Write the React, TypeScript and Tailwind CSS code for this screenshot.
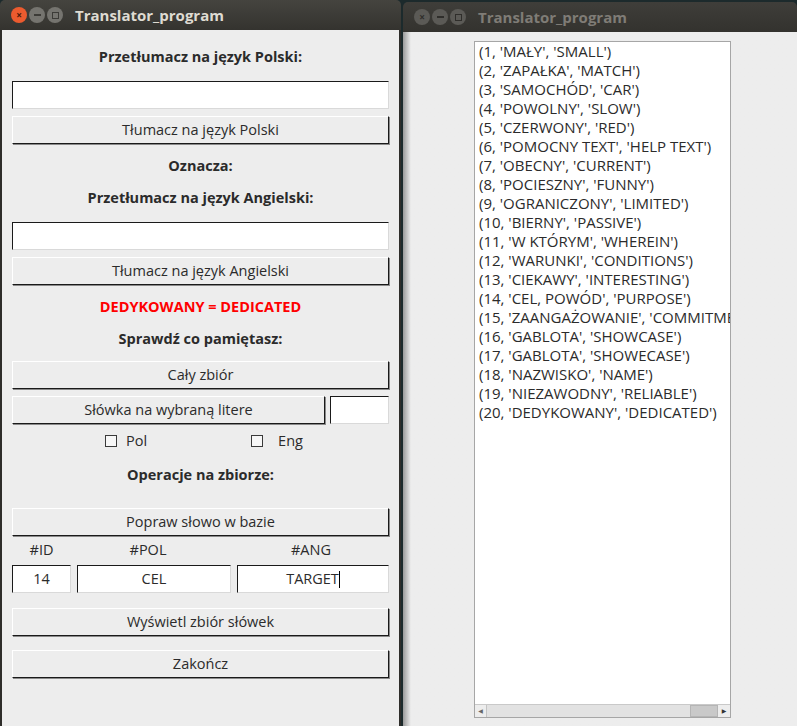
import React from 'react';

const FONT = { fontFamily: '"Open Sans", "DejaVu Sans", sans-serif' };

const words: string[] = [
  "(1, 'MAŁY', 'SMALL')",
  "(2, 'ZAPAŁKA', 'MATCH')",
  "(3, 'SAMOCHÓD', 'CAR')",
  "(4, 'POWOLNY', 'SLOW')",
  "(5, 'CZERWONY', 'RED')",
  "(6, 'POMOCNY TEXT', 'HELP TEXT')",
  "(7, 'OBECNY', 'CURRENT')",
  "(8, 'POCIESZNY', 'FUNNY')",
  "(9, 'OGRANICZONY', 'LIMITED')",
  "(10, 'BIERNY', 'PASSIVE')",
  "(11, 'W KTÓRYM', 'WHEREIN')",
  "(12, 'WARUNKI', 'CONDITIONS')",
  "(13, 'CIEKAWY', 'INTERESTING')",
  "(14, 'CEL, POWÓD', 'PURPOSE')",
  "(15, 'ZAANGAŻOWANIE', 'COMMITMENT')",
  "(16, 'GABLOTA', 'SHOWCASE')",
  "(17, 'GABLOTA', 'SHOWECASE')",
  "(18, 'NAZWISKO', 'NAME')",
  "(19, 'NIEZAWODNY', 'RELIABLE')",
  "(20, 'DEDYKOWANY', 'DEDICATED')",
];

const TitleBar: React.FC<{ active: boolean }> = ({ active }) => (
  <div
    className={`flex items-center h-[30px] rounded-t-[5px] ${
      active ? 'bg-gradient-to-b from-[#45443f] to-[#34332f]' : 'bg-gradient-to-b from-[#3f3e3a] to-[#33322e]'
    }`}
  >
    <div className="flex items-center gap-[2px] pl-[11px]">
      <span
        className={`w-[16px] h-[16px] rounded-full flex items-center justify-center text-[10px] leading-none font-bold ${
          active ? 'bg-[#ec5b2f] text-[#4a1a0a]' : 'bg-[#5b5a56] text-[#2f2e2b]'
        }`}
      >
        ×
      </span>
      <span
        className={`w-[16px] h-[16px] rounded-full flex items-center justify-center ${
          active ? 'bg-[#75746f]' : 'bg-[#5b5a56]'
        }`}
      >
        <span className={`w-[7px] h-[2px] ${active ? 'bg-[#3c3b37]' : 'bg-[#2f2e2b]'}`} />
      </span>
      <span
        className={`w-[16px] h-[16px] rounded-full flex items-center justify-center ${
          active ? 'bg-[#75746f]' : 'bg-[#5b5a56]'
        }`}
      >
        <span className={`w-[7px] h-[7px] border ${active ? 'border-[#3c3b37]' : 'border-[#2f2e2b]'}`} />
      </span>
    </div>
    <span
      className={`ml-[12px] text-[15px] font-bold ${active ? 'text-[#dfdbd2]' : 'text-[#7f7c76]'}`}
    >
      Translator_program
    </span>
  </div>
);

const Label: React.FC<{ children: React.ReactNode; red?: boolean; mt: string }> = ({ children, red, mt }) => (
  <div
    className={`${mt} h-[22px] leading-[22px] text-center text-[14.5px] font-bold ${
      red ? 'text-[#ff0000]' : 'text-[#2b2b2b]'
    }`}
  >
    {children}
  </div>
);

const Button: React.FC<{ children: React.ReactNode; mt: string; className?: string }> = ({
  children,
  mt,
  className = '',
}) => (
  <div
    className={`${mt} ${className} h-[28px] flex items-center justify-center bg-[#ededed] border border-t-white border-l-white border-r-[#1a1a1a] border-b-[#1a1a1a] shadow-[1px_1px_0_#8a8a8a] text-[14.5px] text-[#2b2b2b]`}
  >
    {children}
  </div>
);

const Entry: React.FC<{ value?: string; mt?: string; className?: string; cursor?: boolean }> = ({
  value,
  mt = '',
  className = '',
  cursor,
}) => (
  <div
    className={`${mt} ${className} h-[28px] flex items-center justify-center bg-white border border-t-[#1a1a1a] border-l-[#1a1a1a] border-r-[#d9d9d9] border-b-[#d9d9d9] text-[14.5px] text-[#2b2b2b]`}
  >
    {value}
    {cursor && <span className="w-[1px] h-[17px] bg-black" />}
  </div>
);

const CheckBox: React.FC<{ label: string; gap: string }> = ({ label, gap }) => (
  <div className={`flex items-center ${gap} text-[14.5px] text-[#2b2b2b]`}>
    <span className="w-[12px] h-[12px] border border-[#3a3a3a] bg-[#f7f7f7]" />
    <span>{label}</span>
  </div>
);

export default function App() {
  return (
    <div className="flex w-[797px] h-[726px] overflow-hidden bg-[#1c2a2c]" style={FONT}>
      {/* left window */}
      <div className="w-[401px] h-[726px] flex flex-col shrink-0">
        <TitleBar active />
        <div className="flex-1 flex flex-col bg-[#ededed] border-l-2 border-r-2 border-[#2e2d2a] px-[10px]">
          <Label mt="mt-[16px]">Przetłumacz na język Polski:</Label>
          <Entry mt="mt-[13px]" />
          <Button mt="mt-[7px]">Tłumacz na język Polski</Button>
          <Label mt="mt-[11px]">Oznacza:</Label>
          <Label mt="mt-[10px]">Przetłumacz na język Angielski:</Label>
          <Entry mt="mt-[13px]" />
          <Button mt="mt-[7px]">Tłumacz na język Angielski</Button>
          <Label mt="mt-[11px]" red>
            DEDYKOWANY = DEDICATED
          </Label>
          <Label mt="mt-[10px]">Sprawdź co pamiętasz:</Label>
          <Button mt="mt-[11px]">Cały zbiór</Button>
          <div className="mt-[7px] flex gap-[5px]">
            <Button mt="" className="flex-1">
              Słówka na wybraną litere
            </Button>
            <Entry className="w-[59px]" />
          </div>
          <div className="mt-[6px] h-[22px] flex items-center">
            <div className="ml-[93px]">
              <CheckBox label="Pol" gap="gap-[9px]" />
            </div>
            <div className="ml-[104px]">
              <CheckBox label="Eng" gap="gap-[15px]" />
            </div>
          </div>
          <Label mt="mt-[12px]">Operacje na zbiorze:</Label>
          <Button mt="mt-[22px]">Popraw słowo w bazie</Button>
          <div className="mt-[3px] h-[22px] flex items-center text-[14.5px] text-[#2b2b2b]">
            <span className="w-[59px] text-center">#ID</span>
            <span className="ml-[6px] w-[142px] text-center">#POL</span>
            <span className="ml-[14px] flex-1 text-center">#ANG</span>
          </div>
          <div className="mt-[4px] flex gap-[6px]">
            <Entry className="w-[59px]" value="14" />
            <Entry className="w-[154px]" value="CEL" />
            <Entry className="flex-1" value="TARGET" cursor />
          </div>
          <Button mt="mt-[15px]">Wyświetl zbiór słówek</Button>
          <Button mt="mt-[14px]">Zakończ</Button>
        </div>
      </div>

      {/* right window */}
      <div className="ml-[2px] flex-1 flex flex-col pt-[2px]">
        <TitleBar active={false} />
        <div className="flex-1 flex bg-[#ededed] bg-gradient-to-r from-[#9a9a9a] via-[#ededed] via-[2%] to-[#ededed]">
          <div className="ml-[71px] mt-[9px] mb-[8px] w-[257px] flex flex-col bg-white border border-[#a6a6a6] overflow-hidden">
            <div className="flex-1 overflow-hidden pl-[4px] text-[15px] leading-[19px] text-[#2b2b2b] whitespace-nowrap">
              {words.map((w) => (
                <div key={w}>{w}</div>
              ))}
            </div>
            <div className="h-[13px] flex bg-[#e0e0e0] border-t border-[#c9c9c9]">
              <div className="w-[12px] flex items-center justify-center bg-[#ededed] border-r border-[#c4c4c4] text-[6px] text-[#666]">
                ◀
              </div>
              <div className="flex-1 bg-[#e2e2e2]" />
              <div className="w-[28px] bg-[#c9c9c9] border border-[#b5b5b5]" />
              <div className="w-[12px] flex items-center justify-center bg-[#ededed] text-[6px] text-[#333]">
                ▶
              </div>
            </div>
          </div>
        </div>
      </div>
    </div>
  );
}
